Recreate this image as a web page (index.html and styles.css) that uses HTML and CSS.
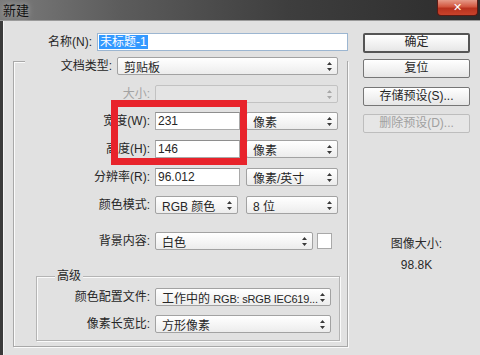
FILE: index.html
```html
<!DOCTYPE html>
<html lang="zh-CN">
<head>
<meta charset="utf-8">
<title>新建</title>
<link rel="stylesheet" href="styles.css">
</head>
<body>
<div class="dialog">
  <div class="titlebar">
    <span class="title">新建</span>
    <span class="close">✕</span>
  </div>
  <div class="body">
    <div class="left">
      <div class="row r-name">
        <span class="lbl w-name">名称(N):</span>
        <div class="input focus w-name-in"><span class="sel-text">未标题-1</span></div>
      </div>
      <div class="frame">
        <div class="row r-preset">
          <span class="lbl w-preset">文档类型:</span>
          <div class="select w-wide"><span>剪贴板</span><svg class="arr" width="5" height="9" viewBox="0 0 5 9"><path d="M2.5 0L5 3H0z M2.5 9L0 6h5z"/></svg></div>
        </div>
        <div class="row r-size">
          <span class="lbl w-dim dis">大小:</span>
          <div class="select w-size disabled"><span></span><svg class="arr" width="5" height="9" viewBox="0 0 5 9"><path d="M2.5 0L5 3H0z M2.5 9L0 6h5z"/></svg></div>
        </div>
        <div class="row r-w">
          <span class="lbl w-dim">宽度(W):</span>
          <div class="input w-num"><span>231</span></div>
          <div class="select w-unit gap6"><span>像素</span><svg class="arr" width="5" height="9" viewBox="0 0 5 9"><path d="M2.5 0L5 3H0z M2.5 9L0 6h5z"/></svg></div>
        </div>
        <div class="row r-h">
          <span class="lbl w-dim">高度(H):</span>
          <div class="input w-num"><span>146</span></div>
          <div class="select w-unit gap6"><span>像素</span><svg class="arr" width="5" height="9" viewBox="0 0 5 9"><path d="M2.5 0L5 3H0z M2.5 9L0 6h5z"/></svg></div>
        </div>
        <div class="row r-res">
          <span class="lbl w-dim">分辨率(R):</span>
          <div class="input w-num"><span>96.012</span></div>
          <div class="select w-unit gap6"><span>像素/英寸</span><svg class="arr" width="5" height="9" viewBox="0 0 5 9"><path d="M2.5 0L5 3H0z M2.5 9L0 6h5z"/></svg></div>
        </div>
        <div class="row r-mode">
          <span class="lbl w-dim">颜色模式:</span>
          <div class="select w-mode"><span>RGB 颜色</span><svg class="arr" width="5" height="9" viewBox="0 0 5 9"><path d="M2.5 0L5 3H0z M2.5 9L0 6h5z"/></svg></div>
          <div class="select w-unit gap8"><span>8 位</span><svg class="arr" width="5" height="9" viewBox="0 0 5 9"><path d="M2.5 0L5 3H0z M2.5 9L0 6h5z"/></svg></div>
        </div>
        <div class="row r-bg">
          <span class="lbl w-dim">背景内容:</span>
          <div class="select w-bg"><span>白色</span><svg class="arr" width="5" height="9" viewBox="0 0 5 9"><path d="M2.5 0L5 3H0z M2.5 9L0 6h5z"/></svg></div>
          <div class="swatch"></div>
        </div>
        <div class="adv">
          <div class="legend">高级</div>
          <div class="row r-prof">
            <span class="lbl w-adv">颜色配置文件:</span>
            <div class="select w-prof"><span>工作中的 <span class="lat">RGB: sRGB IEC619...</span></span><svg class="arr" width="5" height="9" viewBox="0 0 5 9"><path d="M2.5 0L5 3H0z M2.5 9L0 6h5z"/></svg></div>
          </div>
          <div class="row r-asp">
            <span class="lbl w-adv">像素长宽比:</span>
            <div class="select w-prof"><span>方形像素</span><svg class="arr" width="5" height="9" viewBox="0 0 5 9"><path d="M2.5 0L5 3H0z M2.5 9L0 6h5z"/></svg></div>
          </div>
        </div>
      </div>
    </div>
    <div class="right">
      <div class="btn default b-ok">确定</div>
      <div class="btn b-reset">复位</div>
      <div class="btn b-save">存储预设(S)...</div>
      <div class="btn disabled b-del">删除预设(D)...</div>
      <div class="imgsize">
        <div class="is-label">图像大小:</div>
        <div class="is-value">98.8K</div>
      </div>
    </div>
  </div>
  <div class="highlight"></div>
</div>
</body>
</html>
```
FILE: styles.css
```css
* { box-sizing: border-box; }
html, body { margin: 0; padding: 0; }
body {
  width: 480px;
  height: 355px;
  overflow: hidden;
  font-family: "Liberation Sans", "Noto Sans CJK SC", sans-serif;
  font-size: 12px;
  color: #262626;
  background: #e1e1e1;
}
.dialog {
  position: relative;
  width: 480px;
  height: 355px;
  display: flex;
  flex-direction: column;
  background: #e1e1e1;
}
.titlebar {
  height: 21px;
  flex: none;
  display: flex;
  align-items: flex-start;
  justify-content: space-between;
  background: linear-gradient(90deg, #7b7b7b 0%, #5c5c5c 25%, #3e3e3e 60%, #2c2c2c 100%);
  border-bottom: 1px solid #9a9a9a;
}
.title {
  margin: 3px 0 0 3px;
  font-size: 13px;
  line-height: 15px;
  color: #111;
  text-shadow: 0 0 6px rgba(255,255,255,0.55);
}
.close {
  width: 41px;
  height: 16px;
  margin-right: 2px;
  border: 1px solid #5a1a14;
  border-top: none;
  border-radius: 0 0 4px 4px;
  background: linear-gradient(180deg, #e59a88 0%, #d2563f 45%, #b8321e 55%, #c8432b 100%);
  color: #fff;
  font-size: 11px;
  font-weight: bold;
  line-height: 15px;
  text-align: center;
  font-family: "DejaVu Sans", sans-serif;
}
.body {
  flex: 1;
  display: flex;
  border-left: 3px solid #3a3a3a;
  box-shadow: inset 1px 0 0 #f4f4f4;
}
.left {
  width: 345px;
  flex: none;
  display: flex;
  flex-direction: column;
}
.right {
  flex: 1;
  display: flex;
  flex-direction: column;
  padding-left: 15px;
}
.row {
  display: flex;
  align-items: center;
  height: 18px;
  flex: none;
}
.lbl {
  flex: none;
  text-align: right;
  margin-right: 5px;
  white-space: nowrap;
  line-height: 18px;
}
.lbl.dis { color: #a3a3a3; }

.w-name { width: 89px; }
.w-name-in { width: 251px; }
.w-preset { width: 87px; }
.w-dim { width: 136px; }
.w-adv { width: 113px; }
.w-wide { width: 221px; }
.w-size { width: 183px; }
.w-num { width: 85px; }
.w-unit { width: 92px; }
.w-mode { width: 83px; }
.w-bg { width: 158px; }
.w-prof { width: 176px; }
.gap6 { margin-left: 6px; }
.gap8 { margin-left: 8px; }

.r-name { margin-top: 12px; }
.input {
  height: 18px;
  background: #fff;
  border: 1px solid #a9a9a9;
  border-top-color: #8e8e8e;
  padding-left: 2px;
  display: flex;
  align-items: center;
  white-space: nowrap;
  overflow: hidden;
}
.input.focus {
  border-color: #9cb6d1;
  padding-left: 1px;
}
.sel-text {
  background: #3399ff;
  color: #fff;
  line-height: 14px;
  padding: 0 1px;
}
.select {
  height: 18px;
  flex: none;
  display: flex;
  align-items: center;
  padding: 0 5px 0 6px;
  border: 1px solid #a2a2a2;
  border-radius: 2px;
  background: linear-gradient(180deg, #ffffff 0%, #f6f6f6 50%, #ececec 100%);
  white-space: nowrap;
  overflow: hidden;
}
.select > span { flex: 1; overflow: hidden; }
.select .lat { font-size: 11px; letter-spacing: -0.2px; }
.select .arr { flex: none; fill: #3a3a3a; }
.select.disabled {
  background: #e4e4e4;
  border-color: #c2c2c2;
}
.select.disabled .arr { fill: #a8a8a8; }

.frame {
  margin-top: 10px;
  margin-left: 10px;
  width: 335px;
  height: 286px;
  border: 1px solid #a8a8a8;
  box-shadow: inset 1px 1px 0 #fafafa, 1px 1px 0 #fafafa;
  display: flex;
  flex-direction: column;
}
.r-preset {
  margin-top: -5px;
  margin-left: 11px;
  width: 322px;
  background: #e1e1e1;
}
.r-size { margin-top: 10px; }
.r-w { margin-top: 9px; }
.r-h { margin-top: 10px; }
.r-res { margin-top: 10px; }
.r-mode { margin-top: 10px; }
.r-bg { margin-top: 18px; }
.swatch {
  width: 15px;
  height: 16px;
  margin-left: 4px;
  background: #fff;
  border: 1px solid #a9a9a9;
}
.adv {
  margin-top: 26px;
  margin-left: 22px;
  width: 304px;
  height: 65px;
  border: 1px solid #b4b4b4;
  box-shadow: inset 1px 1px 0 #fafafa, 1px 1px 0 #fafafa;
  display: flex;
  flex-direction: column;
}
.legend {
  margin-top: -8px;
  margin-left: 18px;
  padding: 0 2px;
  height: 14px;
  line-height: 14px;
  align-self: flex-start;
  background: #e1e1e1;
}
.r-prof { margin-top: 5px; }
.r-asp { margin-top: 9px; }

.btn {
  width: 107px;
  height: 19px;
  flex: none;
  border: 1px solid #767676;
  border-radius: 2px;
  background: linear-gradient(180deg, #ffffff 0%, #f3f3f3 50%, #e6e6e6 100%);
  text-align: center;
  line-height: 17px;
}
.btn.default {
  border: 2px solid #555;
  line-height: 15px;
}
.btn.disabled {
  color: #a0a0a0;
  border-color: #bdbdbd;
  background: #e6e6e6;
}
.b-ok { margin-top: 12px; height: 20px; }
.b-reset { margin-top: 6px; }
.b-save { margin-top: 9px; }
.b-del { margin-top: 8px; }
.imgsize {
  width: 107px;
  margin-top: 104px;
  text-align: center;
  color: #2a2a2a;
}
.is-label { line-height: 14px; }
.is-value { margin-top: 7px; line-height: 14px; }

.highlight {
  position: absolute;
  left: 111px;
  top: 100px;
  width: 136px;
  height: 65px;
  border: 7px solid #e8232b;
}
```
